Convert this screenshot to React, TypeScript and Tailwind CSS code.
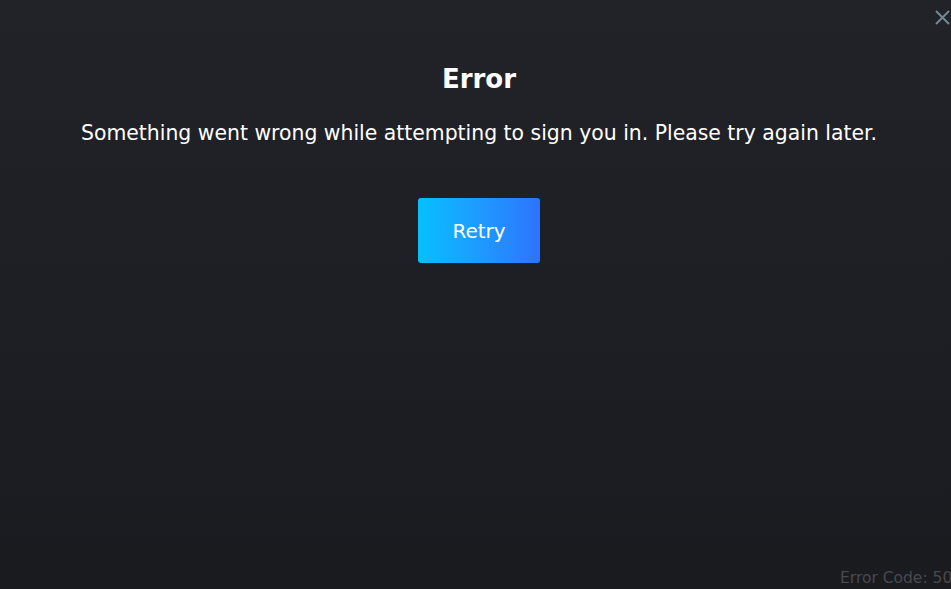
import React from 'react';

function App() {
  return (
    <div
      className="relative h-[589px] w-[951px] overflow-hidden bg-gradient-to-b from-[#222329] to-[#1a1b1f] text-white"
      style={{ fontFamily: '"DejaVu Sans", "Noto Sans", sans-serif' }}
    >
      <button className="absolute right-0 top-[8px] flex h-[18px] w-[18px] items-center justify-center text-[#6f8a94]">
        <svg width="15" height="15" viewBox="0 0 15 15" fill="none" stroke="currentColor" strokeWidth="2">
          <path d="M1 1 L14 14 M14 1 L1 14" />
        </svg>
      </button>

      <div className="flex flex-col items-center pl-[7px] pt-[62px]">
        <h1 className="text-[26px] font-bold leading-[34px]">Error</h1>
        <p className="mt-[23px] text-[20.4px] leading-[28px]">
          Something went wrong while attempting to sign you in. Please try again later.
        </p>
        <button className="mt-[51px] h-[65px] w-[122px] rounded-[3px] bg-gradient-to-r from-[#06bfff] to-[#2d73ff] text-[20px] text-white">
          Retry
        </button>
      </div>

      {/* sits past the right edge, as in the client window */}
      <div className="absolute left-[840px] top-[568px] whitespace-nowrap text-[15.5px] leading-[20px] text-[#48494f]">
        Error Code: 502
      </div>
    </div>
  );
}

export default App;
